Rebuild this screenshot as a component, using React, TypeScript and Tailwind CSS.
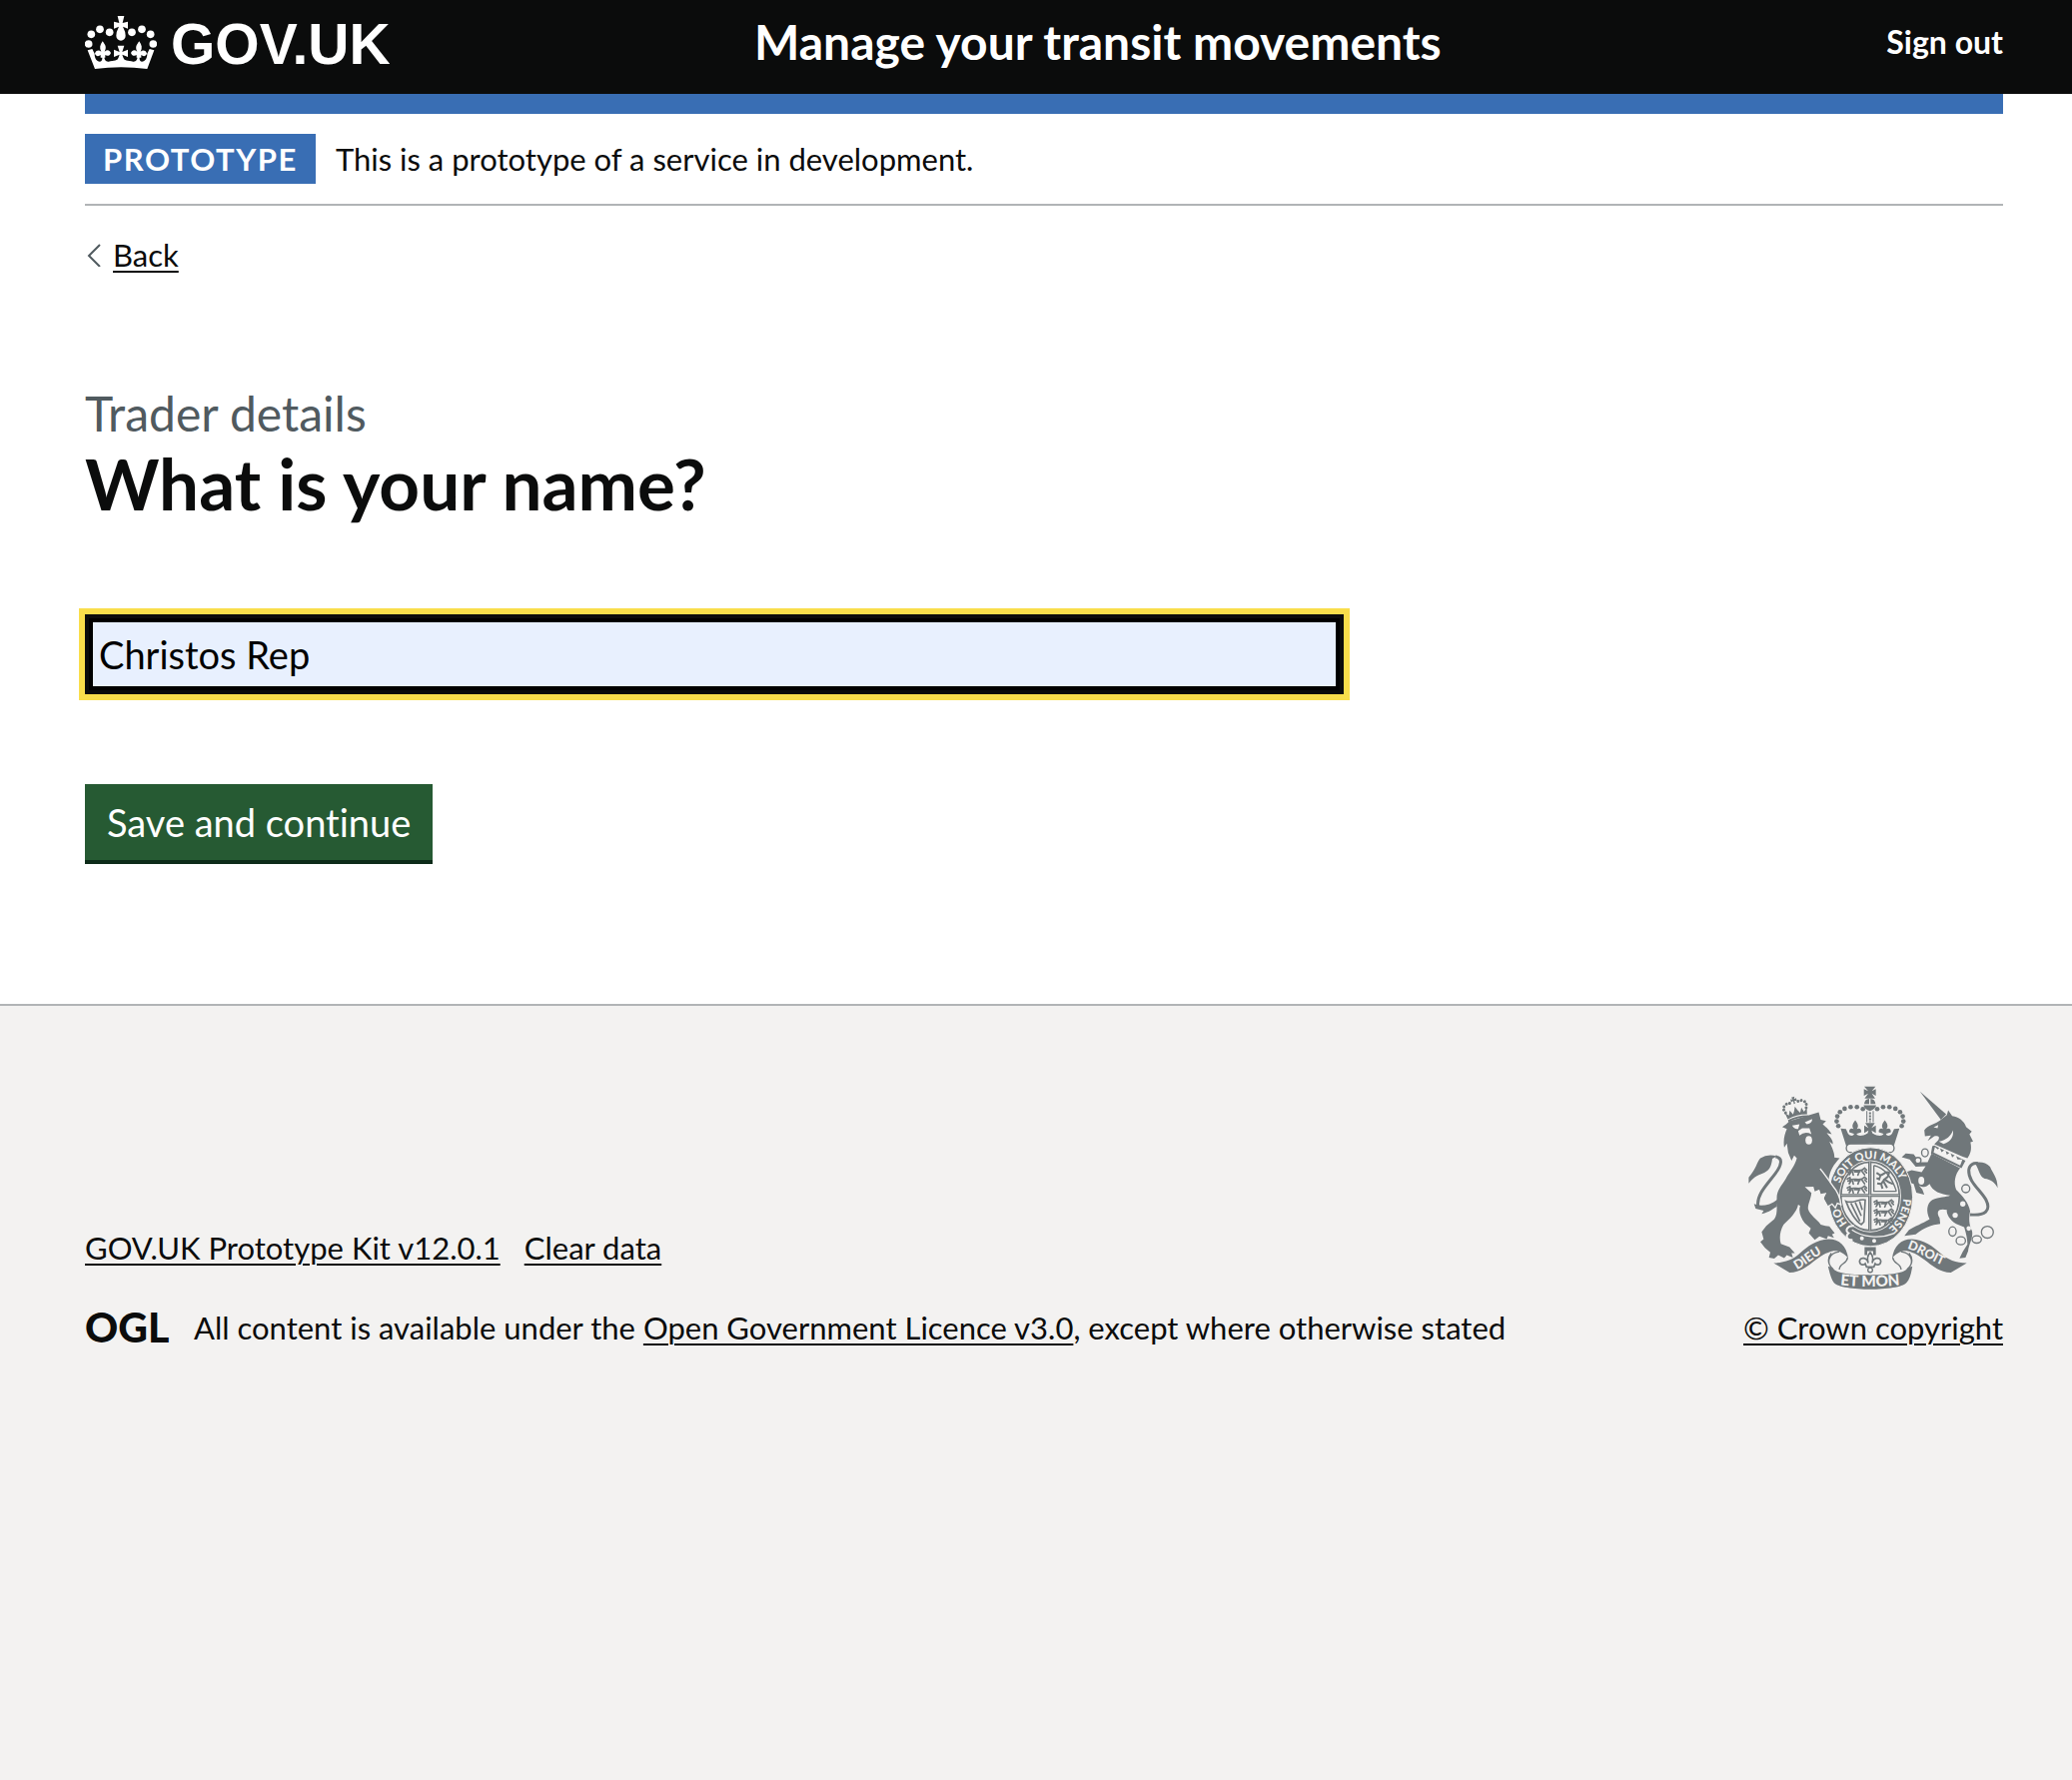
import type { FC, ReactNode } from 'react'
import React, { useState } from 'react'

interface LinkProps {
    href: string
    children: ReactNode
}

const TextLink: FC<LinkProps> = ({ href, children }) => (
    <a href={href} className="underline decoration-2 underline-offset-4">{children}</a>
)

const CrownLogo = () => (
    <svg className="h-[53px] w-[72px]" viewBox="75 45 216 159" fill="currentColor" aria-hidden="true">
        {[[94, 100], [120, 85], [149, 94], [216, 94], [246, 85], [272, 100], [86, 129], [280, 129]].map(([x, y]) => (
            <circle key={x} cx={x} cy={y} r="11.5" />
        ))}
        <path d="M173 45H193L188 66L204 62V83L189 77Q197 92 197 104A14 15 0 0 1 169 104Q169 92 177 77L162 83V62L178 66Z" />
        <path d="M83 148L97 144L104 158C104 172 110 181 120 182C126 182 128 176 127 162H133C132 176 138 183 146 182C162 180 174 178 176 172H190C192 178 204 180 220 182C228 183 234 176 233 162H239C238 176 240 182 246 182C256 181 262 172 262 158L269 144L283 148L262 204Q183 194 105 204Z" />
        <path d="M173 134H193L187 153L204 146V168L187 161L193 178H173L179 161L162 168V146L179 153Z" />
        <path id="crown-fleur" d="M128 121C138 134 140 140 134 152C142 146 148 146 153 156C150 166 140 166 136 162V170H122V162C116 168 106 166 105 157C110 146 118 148 124 152C118 142 120 132 128 121Z" />
        <use href="#crown-fleur" transform="matrix(-1 0 0 1 366 0)" />
    </svg>
)

// Three walking lions, used in two quarters of the shield
const LionsPassant: FC<{ x: number; y: number }> = ({ x, y }) => (
    <g transform={`translate(${x} ${y})`} stroke="currentColor" strokeWidth="5" fill="none" strokeLinecap="round">
        {[0, 27, 54].map((dy) => (
            <path key={dy} transform={`translate(0 ${dy})`} d="M4 8L12 4L14 12L6 14M12 10C24 6 36 12 48 8L56 2L62 8M16 12L10 22M20 14L22 23M40 13L36 23M48 11L56 22M26 13H42M56 10L62 16" />
        ))}
    </g>
)

const RoyalArms = () => (
    <svg className="h-[204px] w-[250px] font-[Lato] text-[#70777a]" viewBox="27 22 750 614" fill="currentColor" aria-hidden="true">
        <defs>
            <path id="garter" d="M394 470A98 114 0 1 1 395 470" />
            <path id="dieu" d="M172 576C200 564 220 538 284 510" />
            <path id="droit" d="M504 512C550 526 570 550 640 574" />
            <path id="etmon" d="M300 622Q392 632 486 622" />
        </defs>

        {/* lion */}
        <path d="M150 128L238 102L244 124L260 128L250 138C264 150 270 156 277 168L262 164C276 180 282 188 280 198L270 190C280 212 286 226 285 238L301 240C284 258 270 278 268 306C280 316 288 326 290 344L303 374L290 372L286 384L276 374L264 378L254 360L262 344L244 348L240 334L226 340L222 326L196 327L216 345C214 365 204 380 206 394C212 412 232 424 244 440L258 444L270 446L286 466L278 470L284 480L266 474L262 484L240 476L226 486L208 466L214 452L196 436C184 420 176 400 182 384L176 380C172 402 150 424 132 440C122 456 118 480 124 498L150 508L166 526L156 526L160 540L142 532L134 541L116 532L104 543L88 540L92 524L76 510L62 492L72 484L66 462L80 444L104 424C116 408 110 380 112 352C116 330 132 316 142 296C152 280 166 262 172 240L164 232L156 248L146 224L142 196L134 208C130 184 136 166 142 152L128 146L140 138Z" />
        <path d="M55 384C50 350 84 318 106 288C128 260 130 238 108 236" fill="none" stroke="currentColor" strokeWidth="9" />
        <path d="M112 234Q84 226 62 240C52 250 50 272 27 298V316C44 294 60 290 74 284C92 276 96 260 98 242Z" />
        <path d="M43 378C60 386 90 384 114 364L112 386C98 392 92 402 66 408L72 398L48 392Z" />
        <g fill="#f3f2f1">
            <path d="M158 142L180 138L176 152Q164 154 158 142ZM196 132L218 122Q220 134 202 138ZM176 158L188 150L210 150L216 168Q196 158 180 172Z" />
            <ellipse cx="208" cy="186" rx="10" ry="13" />
        </g>
        <g transform="rotate(-14 168 92)">
            {[[136, 96], [133, 86], [136, 77], [145, 71], [155, 71], [181, 71], [191, 71], [200, 77], [203, 86], [200, 96]].map(([x, y]) => (
                <circle key={`${x}-${y}`} cx={x} cy={y} r="4.5" />
            ))}
            <path d="M164 55H174L171 62L178 60V69L171 67V76H167V67L160 69V60L167 62ZM134 96L144 106L150 92L157 106L163 96L168 84L173 96L179 106L186 92L191 106L202 96L198 116Q168 108 138 116ZM138 119Q168 111 200 119V125Q168 117 138 125Z" />
        </g>

        {/* unicorn */}
        <path d="M543 39L622 108L606 124Z" />
        <path d="M556 156C566 140 590 138 604 126L624 110L628 96L640 113C660 116 676 128 682 146L699 160L692 168L703 190L695 192C700 214 694 230 686 240L672 236L586 198L598 186C604 176 598 172 586 174L566 188L576 172L558 174Z" />
        <path d="M584 147L598 140L596 150ZM600 190C622 186 638 172 642 156C646 172 636 192 614 197Z" fill="#f3f2f1" />
        <path d="M580 204L586 202L680 248L668 270L576 226Z" />
        <path d="M588 206L597 214L602 207L608 222L619 214L624 230L634 222L640 238L650 229L656 244L671 244L664 262L584 223Z" fill="#f3f2f1" />
        <path d="M578 226L664 270C648 290 644 312 652 335C672 355 690 375 694 400C690 420 690 440 700 460C704 480 690 500 688 520L680 540L662 542L672 522L686 500C686 480 680 460 676 448L652 438C632 426 622 408 624 396C600 390 590 400 602 420L604 438C580 440 550 452 530 470L496 474L510 456C540 440 560 432 572 424C560 400 564 376 580 366C600 356 622 358 634 352C606 350 580 340 572 318C560 330 552 328 540 322L550 334L556 350L532 344L524 318L506 312L500 282L518 276L548 282L560 264L530 266L512 244L488 237L500 226L524 228L542 252L566 252Z" />
        <path d="M694 410C740 414 758 398 742 366C726 336 688 312 690 276C692 260 704 254 718 256" fill="none" stroke="currentColor" strokeWidth="9" />
        <path d="M708 254Q736 248 754 266C764 290 776 296 777 330C768 312 756 304 738 302C722 296 722 276 708 254Z" />
        <g fill="none" stroke="currentColor" strokeWidth="4">
            <ellipse cx="558" cy="224" rx="10" ry="12" />
            <circle cx="537" cy="247" r="9" fill="#f3f2f1" />
            <ellipse cx="641" cy="461" rx="11" ry="14" />
            <ellipse cx="666" cy="489" rx="14" ry="12" />
            <ellipse cx="714" cy="485" rx="14" ry="11" />
            <circle cx="746" cy="463" r="18" />
            <circle cx="681" cy="332" r="12" fill="#f3f2f1" />
        </g>
        <g fill="#f3f2f1">
            <ellipse cx="547" cy="308" rx="9" ry="12" />
            <circle cx="672" cy="378" r="8" />
            <circle cx="649" cy="412" r="8" />
            <circle cx="690" cy="452" r="7" />
        </g>

        {/* crown */}
        <path d="M375 24H409L398 38L410 32V52L398 45L408 60H376L387 45L374 52V32L387 38ZM375 77A17 17 0 0 1 390 61V77ZM409 77A17 17 0 0 0 394 61V77ZM373 81H411Q408 94 392 98Q376 94 373 81Z" />
        {[[371, 92], [353, 86], [334, 86], [316, 91], [302, 101], [294, 114], [292, 129], [297, 143]].map(([x, y]) => (
            <g key={x}>
                <circle cx={x} cy={y} r="7" />
                <circle cx={785 - x} cy={y} r="7" />
            </g>
        ))}
        <path d="M383 98V132M402 98V132" stroke="currentColor" strokeWidth="3" />
        <path d="M392.5 102V132" stroke="currentColor" strokeWidth="6" strokeDasharray="6 3" />
        <path d="M304 151L320 152L326 166C332 174 342 176 345 166H351C356 176 370 174 384 166H401C415 174 429 176 434 166H440C443 176 453 174 459 166L465 152L481 151L464 204Q392 188 321 204Z" />
        <path d="M378 134H407L397 149L410 142V164L397 157L402 172H383L388 157L375 164V142L388 149Z" />
        <path id="arms-fleur" d="M348 126C358 138 358 146 353 152C360 148 368 152 366 162L348 168L330 162C328 152 336 148 343 152C338 146 338 138 348 126Z" />
        <use href="#arms-fleur" x="89" />
        <rect x="321" y="197" width="144" height="26" rx="13" fill="#f3f2f1" stroke="currentColor" strokeWidth="4" />

        {/* garter and shield */}
        <ellipse cx="394" cy="357" rx="127" ry="149" stroke="#f3f2f1" strokeWidth="3" />
        <ellipse cx="393" cy="355" rx="93" ry="109" fill="#f3f2f1" />
        <ellipse cx="393" cy="355" rx="88" ry="103" fill="none" stroke="currentColor" strokeWidth="5" />
        <g fill="#f3f2f1" fontSize="33" fontWeight="900">
            <text><textPath href="#garter" startOffset="12%">HO</textPath></text>
            <text><textPath href="#garter" startOffset="31%">SOIT QUI MALY</textPath></text>
            <text><textPath href="#garter" startOffset="76%">PENSE</textPath></text>
        </g>
        <path d="M387 250H397V458H387ZM305 348H481V357H305Z" />
        <path d="M392 250V458M305 352H481" stroke="#f3f2f1" strokeWidth="1.5" />
        <LionsPassant x={320} y={268} />
        <LionsPassant x={401} y={364} />
        <path d="M404 262V340H472M404 262Q450 272 472 340" fill="none" stroke="currentColor" strokeWidth="4" />
        <path d="M412 284L424 292L420 304L412 300M424 292C436 288 440 278 450 284L446 296L436 304L448 312L462 318M436 304L426 318L414 316M434 312L444 330M426 318L430 332" fill="none" stroke="currentColor" strokeWidth="6" />
        <path d="M320 370C340 380 360 360 378 366L374 432L366 440C350 430 330 400 320 370ZM335 376L362 430M348 374L366 414M361 370L369 396" fill="none" stroke="currentColor" strokeWidth="5" />
        <path d="M338 456C370 478 420 484 466 466" fill="none" stroke="#f3f2f1" strokeWidth="4" />
        <path d="M344 444C324 442 316 458 328 466C318 474 322 488 340 486" fill="none" stroke="#f3f2f1" strokeWidth="6" />
        <circle cx="368" cy="482" r="6" fill="#f3f2f1" />
        <circle cx="405" cy="489" r="6" fill="#f3f2f1" />

        {/* lion's paw, over the garter */}
        <path d="M246 276C258 290 270 312 280 328C292 342 300 358 303 380L294 374L288 388L278 376L266 384L254 362L262 344L240 336Z" />
        <path d="M242 272C256 288 270 310 282 326C296 342 302 358 305 380L294 376L288 390L278 378L266 386" fill="none" stroke="#f3f2f1" strokeWidth="4" />

        {/* motto scroll */}
        <g id="scroll-half">
            <path d="M102 556L150 585C180 584 200 570 222 552C244 534 262 524 280 520C298 518 314 526 327 542C322 505 300 484 268 484C230 486 205 505 180 528C160 546 135 556 102 556Z" />
            <path d="M300 522C268 526 258 556 282 575M276 526C258 548 270 574 300 590M325 540C322 560 300 556 300 576" fill="none" stroke="currentColor" strokeWidth="4" />
        </g>
        <use href="#scroll-half" transform="matrix(-1 0 0 1 786 0)" />
        <path d="M278 570C288 588 340 592 393 592C446 592 498 588 508 570L520 566C516 590 512 606 502 616C480 642 306 642 284 616C276 606 272 590 266 566Z" />
        <g fill="#f3f2f1" fontWeight="900">
            <text fontSize="38"><textPath href="#dieu">DIEU</textPath></text>
            <text fontSize="38"><textPath href="#droit">DROIT</textPath></text>
            <text fontSize="46"><textPath href="#etmon" startOffset="50%" textAnchor="middle">ET MON</textPath></text>
        </g>
        <path d="M376 508H410V532H402V520H384V532H376Z" />
        <path d="M393 524C404 536 402 546 399 556C402 540 422 536 425 550C425 562 414 564 408 558L404 568H382L378 558C372 564 361 562 361 550C364 536 384 540 387 556C384 546 382 536 393 524Z" fill="none" stroke="currentColor" strokeWidth="5" />
        <circle cx="393" cy="577" r="7" fill="none" stroke="currentColor" strokeWidth="4" />
    </svg>
)

const Header = () => (
    <header className="bg-[#0b0c0c] text-white">
        <div className="flex h-[94px] items-center pr-[69px] pb-[10px] pl-[85px]">
            <a href="#" className="flex basis-[670px] items-center gap-3.5">
                <CrownLogo />
                <span className="pt-1 font-['Liberation_Sans',sans-serif] text-[57px] leading-[60px] font-bold">GOV.UK</span>
            </a>
            <a href="#" className="text-5xl leading-[60px] font-bold">Manage your transit movements</a>
            <a href="#" className="ml-auto text-[32px] leading-10 font-bold">Sign out</a>
        </div>
    </header>
)

const Footer = () => (
    <footer className="flex-1 border-t-2 border-[#b1b4b6] bg-[#f3f2f1] pt-20 pr-[69px] pb-20 pl-[85px]">
        <div className="flex items-end justify-between">
            <div>
                <ul className="mb-10 flex gap-6">
                    <li><TextLink href="#">GOV.UK Prototype Kit v12.0.1</TextLink></li>
                    <li><TextLink href="#">Clear data</TextLink></li>
                </ul>
                <div className="flex items-center">
                    <span className="w-[109px] text-[41px] leading-10 font-black">OGL</span>
                    <p>
                        All content is available under the <TextLink href="#">Open Government Licence v3.0</TextLink>, except where otherwise stated
                    </p>
                </div>
            </div>
            <div className="flex flex-col items-center gap-[18px]">
                <RoyalArms />
                <TextLink href="#">© Crown copyright</TextLink>
            </div>
        </div>
    </footer>
)

const App = () => {
    const [name, setName] = useState('Christos Rep')

    const handleSubmit = (e: React.FormEvent) => {
        e.preventDefault()
    }

    return (
        <div className="flex min-h-screen flex-col bg-white font-[Lato,sans-serif] text-[31px] leading-10 text-[#0b0c0c] [font-variant-ligatures:no-common-ligatures]">
            <Header />
            <div className="pr-[69px] pl-[85px]">
                <div className="h-5 bg-[#396eb4]" />
                <div className="flex items-center gap-5 border-b-2 border-[#b1b4b6] py-5">
                    <strong className="bg-[#396eb4] px-[18px] leading-[50px] font-bold tracking-wider text-white">PROTOTYPE</strong>
                    <span>This is a prototype of a service in development.</span>
                </div>
                <a href="#" className="mt-[29px] inline-flex items-center gap-3">
                    <svg className="h-6 w-4" viewBox="0 0 16 24" fill="none" stroke="#505a5f" strokeWidth="2" aria-hidden="true">
                        <path d="M15 2L4 13L15 24" />
                    </svg>
                    <span className="underline decoration-2 underline-offset-4">Back</span>
                </a>
                <main className="pt-[109px] pb-[140px]">
                    <form onSubmit={handleSubmit}>
                        <span className="block text-5xl leading-[60px] text-[#505a5f]">Trader details</span>
                        <h1 className="text-[71px] leading-20 font-bold">
                            <label htmlFor="name">What is your name?</label>
                        </h1>
                        <div className="mt-[91px] grid grid-cols-3 gap-[60px]">
                            <input
                                id="name"
                                name="name"
                                type="text"
                                className="col-span-2 h-20 border-4 border-[#0b0c0c] bg-[#e8f0fe] px-2.5 text-[38px] text-black shadow-[inset_0_0_0_4px_#000] outline-6 outline-[#f9de4b]"
                                value={name}
                                onChange={(e) => setName(e.target.value)}
                            />
                        </div>
                        <button type="submit" className="mt-[90px] block border-b-4 border-[#0d2b19] bg-[#265a33] px-[22px] text-[38px] leading-[76px] text-white">
                            Save and continue
                        </button>
                    </form>
                </main>
            </div>
            <Footer />
        </div>
    )
}

export default App
